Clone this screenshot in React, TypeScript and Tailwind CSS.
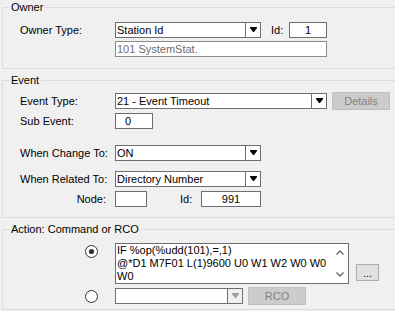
import React from "react";

type BoxProps = {
  w: string;
  children?: React.ReactNode;
  center?: boolean;
  disabled?: boolean;
  className?: string;
};

const DropArrow = ({ disabled }: { disabled?: boolean }) => (
  <svg width="7" height="6" viewBox="0 0 7 6">
    <polygon points="0,0 7,0 7,1 4,5 3,5 0,1" fill={disabled ? "#a0a0a0" : "#000"} />
  </svg>
);

const Combo = ({ w, children, disabled }: BoxProps) => (
  <div className={`flex h-[16px] ${w} shrink-0 border border-[#6e6e6e] bg-white`}>
    <div className="flex-1 truncate pl-[1px] leading-[14px]">{children}</div>
    <div
      className={`flex w-[15px] items-center justify-center border-l border-[#6e6e6e] ${
        disabled ? "bg-[#f0f0f0]" : "bg-white"
      }`}
    >
      <DropArrow disabled={disabled} />
    </div>
  </div>
);

const Box = ({ w, children, center, disabled, className = "" }: BoxProps) => (
  <div
    className={`h-[16px] ${w} shrink-0 border bg-white leading-[14px] ${
      disabled ? "border-[#8a8a8a] text-[#6d6d6d]" : "border-[#6e6e6e]"
    } ${center ? "text-center" : "pl-[1px]"} ${className}`}
  >
    {children}
  </div>
);

const GrayButton = ({ children }: { children: React.ReactNode }) => (
  <div className="ml-[5px] flex h-[18px] w-[58px] shrink-0 items-center justify-center border border-[#bfbfbf] bg-[#cccccc] text-[#838383]">
    {children}
  </div>
);

const Radio = ({ checked }: { checked?: boolean }) => (
  <svg width="13" height="13" viewBox="0 0 13 13">
    <circle cx="6.5" cy="6.5" r="6" fill="#fff" stroke="#333" strokeWidth="1" />
    {checked && <circle cx="6.5" cy="6.5" r="2.6" fill="#333" />}
  </svg>
);

const Chevron = ({ up }: { up?: boolean }) => (
  <svg width="8" height="5" viewBox="0 0 8 5">
    <polyline
      points={up ? "0.5,4.5 4,1 7.5,4.5" : "0.5,0.5 4,4 7.5,0.5"}
      fill="none"
      stroke="#606060"
      strokeWidth="1.3"
    />
  </svg>
);

const Group = ({ title, children, className = "" }: { title: string; children: React.ReactNode; className?: string }) => (
  <fieldset className={`w-[400px] border border-[#dcdcdc] ${className}`}>
    <legend className="ml-[6px] px-[2px] leading-[13px]">{title}</legend>
    {children}
  </fieldset>
);

const Label = ({ children }: { children?: React.ReactNode }) => (
  <span className="w-[95px] shrink-0 leading-[13px]">{children}</span>
);

export default function App() {
  return (
    <div className="h-[311px] w-[395px] overflow-hidden bg-[#f0f0f0] pl-[2px] pt-[1px] font-['Liberation_Sans',Arial,sans-serif] text-[11px] text-black">
      <Group title="Owner">
        <div className="pb-[11px] pl-[17px] pt-[8px]">
          <div className="flex h-[16px] items-center">
            <Label>Owner Type:</Label>
            <Combo w="w-[146px]">Station Id</Combo>
            <span className="ml-[10px] w-[18px] shrink-0">Id:</span>
            <Box w="w-[38px]" center>
              1
            </Box>
          </div>
          <div className="mt-[3px] flex h-[16px] items-center">
            <Label />
            <Box w="w-[212px]" disabled>
              101 SystemStat.
            </Box>
          </div>
        </div>
      </Group>

      <Group title="Event" className="mt-[5px]">
        <div className="pb-[10px] pl-[17px] pt-[5px]">
          <div className="flex h-[18px] items-center">
            <Label>Event Type:</Label>
            <Combo w="w-[212px]">21 - Event Timeout</Combo>
            <GrayButton>Details</GrayButton>
          </div>
          <div className="mt-[3px] flex h-[16px] items-center">
            <Label>Sub Event:</Label>
            <Box w="w-[38px]" className="pl-[9px]">
              0
            </Box>
          </div>
          <div className="mt-[16px] flex h-[16px] items-center">
            <Label>When Change To:</Label>
            <Combo w="w-[146px]">ON</Combo>
          </div>
          <div className="mt-[10px] flex h-[16px] items-center">
            <Label>When Related To:</Label>
            <Combo w="w-[146px]">Directory Number</Combo>
          </div>
          <div className="mt-[4px] flex h-[16px] items-center">
            <span className="w-[95px] shrink-0 pr-[9px] text-right">Node:</span>
            <Box w="w-[32px]" />
            <span className="ml-[33px] w-[21px] shrink-0">Id:</span>
            <Box w="w-[60px]" center>
              991
            </Box>
          </div>
        </div>
      </Group>

      <Group title="Action: Command or RCO" className="mt-[5px]">
        <div className="pb-[4px] pl-[17px] pt-[7px]">
          <div className="flex">
            <div className="w-[95px] shrink-0 pl-[65px] pt-[2px]">
              <Radio checked />
            </div>
            <div className="flex h-[41px] w-[234px] shrink-0 border border-[#6e6e6e] bg-white">
              <div className="flex-1 pl-[1px] leading-[13px] whitespace-pre">
                {"IF %op(%udd(101),=,1)\n@*D1 M7F01 L(1)9600 U0 W1 W2 W0 W0\nW0"}
              </div>
              <div className="flex w-[17px] flex-col justify-between">
                <div className="flex h-[17px] items-center justify-center">
                  <Chevron up />
                </div>
                <div className="flex h-[17px] items-center justify-center">
                  <Chevron />
                </div>
              </div>
            </div>
            <div className="ml-[7px] mt-[21px] flex h-[17px] w-[23px] shrink-0 items-center justify-center border border-[#adadad] bg-[#e1e1e1] leading-[10px]">
              ...
            </div>
          </div>
          <div className="mt-[3px] flex h-[18px] items-center">
            <div className="flex w-[95px] shrink-0 items-center pl-[65px]">
              <Radio />
            </div>
            <Combo w="w-[128px]" disabled />
            <GrayButton>RCO</GrayButton>
          </div>
        </div>
      </Group>
    </div>
  );
}
